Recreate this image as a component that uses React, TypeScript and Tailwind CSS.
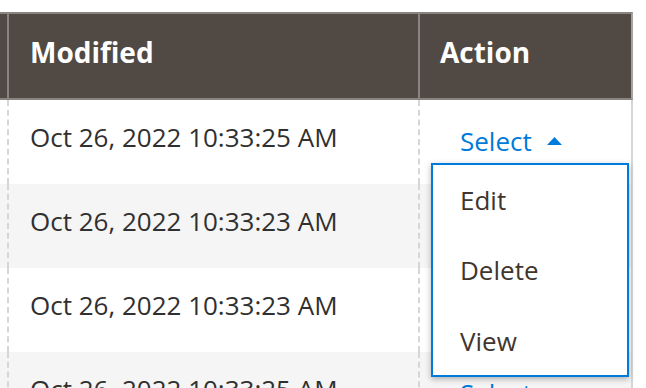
import React from "react";

const rows = [
  { date: "Oct 26, 2022 10:33:25 AM", bg: "bg-white", open: true },
  { date: "Oct 26, 2022 10:33:23 AM", bg: "bg-[#f5f5f5]", open: false },
  { date: "Oct 26, 2022 10:33:23 AM", bg: "bg-white", open: false },
  { date: "Oct 26, 2022 10:33:25 AM", bg: "bg-[#f5f5f5]", open: false },
];

function Caret({ up }: { up: boolean }) {
  return (
    <svg width="15" height="8" viewBox="0 0 15 8" className="ml-[15px]">
      {up ? <polygon points="0,8 7.5,0 15,8" fill="#007bdb" /> : <polygon points="0,0 7.5,8 15,0" fill="#007bdb" />}
    </svg>
  );
}

export default function App() {
  return (
    <div className="relative w-[646px] h-[388px] overflow-hidden bg-white pt-[12px]" style={{ fontFamily: '"Open Sans", sans-serif' }}>
      <div className="w-[633px]">
        {/* header */}
        <div className="flex h-[88px] bg-[#514943] border-t-2 border-b-2 border-[#8a837f] border-r-2 border-r-[#a9a39f]">
          <div className="w-[7px]" />
          <div className="w-[411px] border-l-2 border-[#8a837f] flex items-center pl-[21px] pb-[9px] text-white font-bold text-[28px]">
            Modified
          </div>
          <div className="flex-1 border-l-2 border-[#8a837f] flex items-center pl-[20px] pb-[9px] text-white font-bold text-[28px]">
            Action
          </div>
        </div>
        {rows.map((r, i) => (
          <div key={i} className={`flex h-[84px] ${r.bg} border-r-2 border-[#d6d6d6]`}>
            <div className="w-[7px]" />
            <div className="w-[411px] border-l-2 border-dashed border-[#d6d6d6] pl-[21px] pt-[19px] text-[26px] leading-[36px] text-[#303030]">
              {r.date}
            </div>
            <div className="flex-1 border-l-2 border-dashed border-[#d6d6d6] pl-[40px] pt-[23px]">
              <div className="flex items-center text-[26px] leading-[36px] text-[#007bdb]">
                Select
                <Caret up={r.open} />
              </div>
            </div>
          </div>
        ))}
      </div>
      {/* dropdown */}
      <div className="absolute left-[431px] top-[163px] w-[198px] h-[214px] bg-white border-2 border-[#007bdb] shadow-[0_2px_6px_rgba(0,0,0,0.3)] flex flex-col text-[26px] text-[#41362f]">
        <div className="h-[70px] flex items-center pl-[27px]">Edit</div>
        <div className="h-[70px] flex items-center pl-[27px]">Delete</div>
        <div className="h-[70px] flex items-center pl-[27px] pt-[2px]">View</div>
      </div>
    </div>
  );
}
